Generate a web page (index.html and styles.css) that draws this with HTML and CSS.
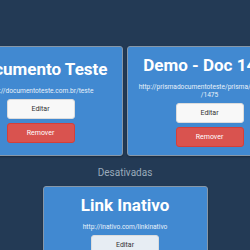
FILE: index.html
```html
<!DOCTYPE html>
<html lang="pt-BR">
<head>
    <meta charset="UTF-8">
    <meta name="viewport" content="width=device-width, initial-scale=1.0">
    <title>Links</title>
    <link rel="stylesheet" href="styles.css">
</head>
<body>
<div class="page">
    <!-- Links ativos -->
    <div class="cards">
        <div class="card">
            <h2 class="card-title">Documento Teste</h2>
            <p class="card-url">http://documentoteste.com.br/teste</p>
            <button class="btn btn-edit">Editar</button>
            <button class="btn btn-remove">Remover</button>
        </div>
        <div class="card">
            <h2 class="card-title">Demo - Doc 1475</h2>
            <p class="card-url">http://prismadocumentoteste/prisma/document<wbr>/1475</p>
            <button class="btn btn-edit">Editar</button>
            <button class="btn btn-remove">Remover</button>
        </div>
    </div>

    <!-- Links desativados -->
    <h3 class="group-title">Desativadas</h3>
    <div class="cards">
        <div class="card">
            <h2 class="card-title">Link Inativo</h2>
            <p class="card-url">http://inativo.com/linkinativo</p>
            <button class="btn btn-edit btn-muted">Editar</button>
            <button class="btn btn-remove">Remover</button>
        </div>
    </div>
</div>
</body>
</html>
```

FILE: styles.css
```css
html, body {
    margin: 0;
    background-color: #233a55;
    overflow: hidden;
}

body {
    font-family: Roboto, "Liberation Sans", sans-serif;
}

.page {
    padding-top: 46px;
}

.cards {
    display: flex;
    justify-content: center;
    gap: 4px;
}

.card {
    flex: 0 0 165px;
    box-sizing: border-box;
    display: flex;
    flex-direction: column;
    align-items: center;
    justify-content: center;
    padding: 8px 10px;
    background-color: #4189d1;
    border: 1px solid #8797a8;
    border-radius: 3px;
    box-shadow: 0 1px 2px rgba(0, 0, 0, 0.3);
    color: #fff;
    text-align: center;
}

.card-title {
    margin: 0;
    font-size: 17px;
    font-weight: 700;
    line-height: 20px;
    white-space: nowrap;
}

.card-url {
    margin: 8px 0 4px;
    font-size: 6.6px;
    line-height: 8px;
    overflow-wrap: anywhere;
    color: #e8f1fa;
}

.btn {
    width: 68px;
    height: 20px;
    margin-bottom: 4px;
    padding: 0;
    border: 1px solid #dcdcdc;
    border-radius: 3px;
    font-family: inherit;
    font-size: 7px;
}

.btn-edit {
    background-color: #f8f8f8;
    color: #333;
}

.btn-muted {
    background-color: #e7edf3;
}

.btn-remove {
    margin-bottom: 0;
    background-color: #d9534f;
    border-color: #d43f3a;
    color: #fff;
}

.group-title {
    margin: 11px 0 7px;
    font-size: 10px;
    font-weight: 400;
    line-height: 12px;
    text-align: center;
    color: #9aaabb;
}
```
